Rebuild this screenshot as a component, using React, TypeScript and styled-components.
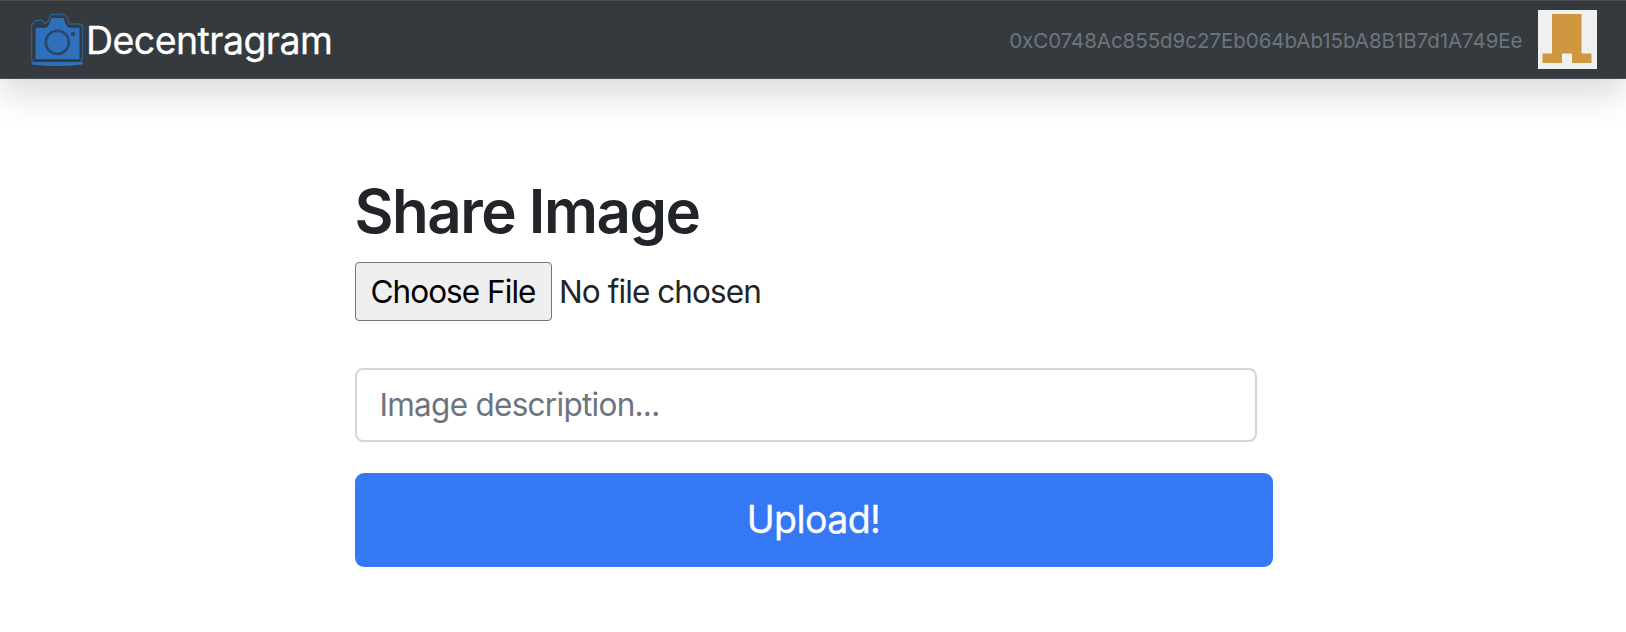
import React from 'react';
import styled, { createGlobalStyle } from 'styled-components';

const GlobalStyle = createGlobalStyle`
  * { box-sizing: border-box; }
  body {
    margin: 0;
    background: #fff;
    color: #212529;
    font-family: Inter, "Liberation Sans", sans-serif;
  }
`;

const Navbar = styled.nav`
  height: 79px;
  padding: 0 29.5px 0 30px;
  display: flex;
  align-items: center;
  justify-content: space-between;
  background: #353a3e;
  border-top: 1px solid #4a4c4d;
  border-bottom: 1px solid #4a4e52;
  box-shadow: 0 15px 34px rgba(0, 0, 0, 0.15);
`;

const Brand = styled.a`
  display: flex;
  align-items: center;
  color: #fff;
  font-size: 37.5px;
  letter-spacing: -0.55px;
  line-height: 1;
  text-decoration: none;
  -webkit-text-stroke: 0.3px #fff;
`;

const BrandName = styled.span`
  padding-top: 2px;
`;

const Logo = styled.svg`
  width: 54px;
  height: 55px;
  margin-right: 2px;
  flex: none;
`;

const Account = styled.div`
  display: flex;
  align-items: center;
  gap: 15px;
`;

const Address = styled.small`
  color: #6c757d;
  font-size: 20.5px;
  letter-spacing: -0.04px;
  line-height: 1;
  padding-top: 4px;
`;

const Identicon = styled.svg`
  width: 59px;
  height: 59px;
  display: block;
  background: #f0f0f0;
`;

const Main = styled.main`
  width: 918px;
  margin: 0 0 0 354.5px;
  padding-top: 95px;
`;

const Title = styled.h2`
  margin: 0 0 14px;
  font-size: 60px;
  font-weight: 600;
  letter-spacing: -1.5px;
  line-height: 74px;
`;

const FileField = styled.div`
  display: flex;
  align-items: center;
  gap: 7.5px;
  font-size: 31.5px;
  letter-spacing: -0.92px;
  line-height: 1;
`;

const FileButton = styled.button`
  width: 197px;
  height: 59px;
  padding: 1px 0 0;
  border: 1.5px solid #767676;
  border-radius: 4px;
  background: #efefef;
  color: #000;
  font: inherit;
  letter-spacing: -0.95px;
`;

const FileStatus = styled.span`
  padding-top: 1px;
`;

const Description = styled.input`
  display: block;
  width: 902px;
  height: 74px;
  margin: 46.5px 0 31px;
  padding: 0 23px;
  border: 2px solid #d3d8dd;
  border-radius: 8px;
  background: #fff;
  font: 31.5px Inter, "Liberation Sans", sans-serif;
  letter-spacing: -0.72px;

  &::placeholder {
    color: #6c757d;
    opacity: 1;
  }
`;

const UploadButton = styled.button`
  display: block;
  width: 100%;
  height: 94px;
  padding: 0;
  border: 0;
  border-radius: 9px;
  background: #3478f6;
  color: #fff;
  font: 37.5px Inter, "Liberation Sans", sans-serif;
  letter-spacing: -0.6px;
  -webkit-text-stroke: 0.3px #fff;
`;

function CameraLogo() {
  return (
    <Logo viewBox="0 0 54 55" aria-hidden="true">
      <path
        d="M4 49a3 3 0 0 1-2.500-3V13L6 8.500h6l3 3L18.500 9l2-5q.500-1.500 2-1.500H34q1.500 0 2 1.500l3.500 8H50a2.500 2.500 0 0 1 2.500 2.500V46a3 3 0 0 1-2.500 3"
        fill="none"
        stroke="#2b5e92"
        strokeWidth="1.300"
      />
      <path d="M5.700 15.700H16.500Q19 14 21.500 6h12q2.500 8 5 9.700h11v31.600h-44Z" fill="#2e70bb" />
      <path d="M1.500 50h51v2.500Q27 55.500 1.500 52.500Z" fill="#2e70bb" />
      <circle cx="27.300" cy="30.300" r="11.600" fill="none" stroke="#29486b" strokeWidth="2.600" />
      <circle cx="43" cy="22" r="2.300" fill="#29486b" />
    </Logo>
  );
}

export default function App() {
  return (
    <>
      <GlobalStyle />
      <Navbar>
        <Brand>
          <CameraLogo />
          <BrandName>Decentragram</BrandName>
        </Brand>
        <Account>
          <Address>0xC0748Ac855d9c27Eb064bAb15bA8B1B7d1A749Ee</Address>
          <Identicon viewBox="0 0 59 59" aria-hidden="true">
            <path d="M14 4h29.500v39.500h10V53H34v-9.500H24V53H4.500v-9.500H14Z" fill="#cf973f" />
          </Identicon>
        </Account>
      </Navbar>
      <Main>
        <Title>Share Image</Title>
        <FileField>
          <FileButton type="button">Choose File</FileButton>
          <FileStatus>No file chosen</FileStatus>
        </FileField>
        <Description type="text" placeholder="Image description..." />
        <UploadButton type="button">Upload!</UploadButton>
      </Main>
    </>
  );
}
